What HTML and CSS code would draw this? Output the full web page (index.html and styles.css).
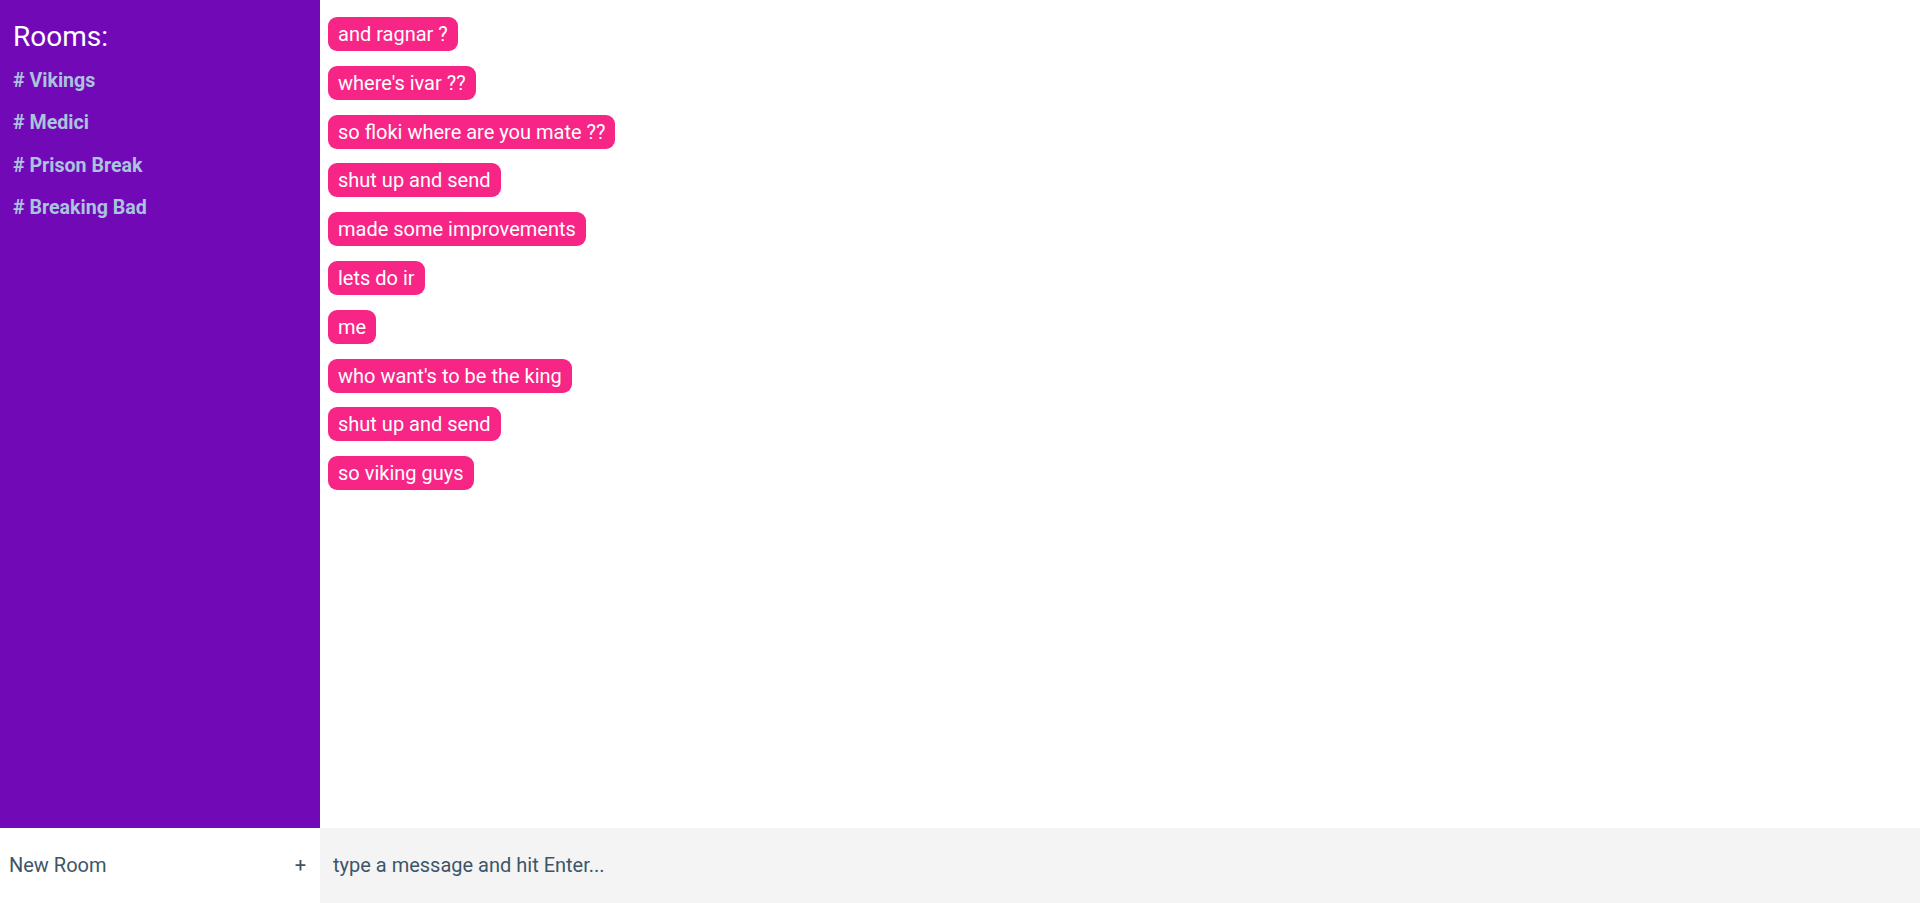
FILE: index.html
```html
<!DOCTYPE html>
<html>
<head>
<meta charset="utf-8">
<title>Chat</title>
<link rel="stylesheet" href="styles.css">
</head>
<body>
<div class="app">
  <aside class="rooms">
    <div class="rooms-title">Rooms:</div>
    <ul class="room-list">
      <li class="room"># Vikings</li>
      <li class="room"># Medici</li>
      <li class="room"># Prison Break</li>
      <li class="room"># Breaking Bad</li>
    </ul>
  </aside>
  <main class="messages">
    <div class="msg">and ragnar ?</div>
    <div class="msg">where's ivar ??</div>
    <div class="msg">so floki where are you mate ??</div>
    <div class="msg">shut up and send</div>
    <div class="msg">made some improvements</div>
    <div class="msg">lets do ir</div>
    <div class="msg">me</div>
    <div class="msg">who want's to be the king</div>
    <div class="msg">shut up and send</div>
    <div class="msg">so viking guys</div>
  </main>
  <form class="new-room">
    <input class="new-room-input" type="text" placeholder="New Room">
    <button class="new-room-btn" type="button">+</button>
  </form>
  <form class="send">
    <input class="send-input" type="text" placeholder="type a message and hit Enter...">
  </form>
</div>
</body>
</html>
```
FILE: styles.css
```css
* { box-sizing: border-box; }
html, body { margin: 0; padding: 0; height: 100%; }
body {
  font-family: Roboto, "Noto Sans", sans-serif;
  background: #fff;
}
.app {
  height: 100vh;
  display: grid;
  grid-template-columns: 1fr 5fr;
  grid-template-rows: 11fr 1fr;
}
.rooms {
  background: #7209b7;
  padding: 20px 13px;
}
.rooms-title {
  color: #fff;
  font-size: 28px;
  margin-bottom: 15.6px;
}
.room-list {
  list-style: none;
  margin: 0;
  padding: 0;
  display: flex;
  flex-direction: column;
  gap: 19.6px;
}
.room {
  color: #a9c4dd;
  font-weight: 700;
  font-size: 19.6px;
}
.messages {
  padding: 17px 8px;
  display: flex;
  flex-direction: column;
  align-items: flex-start;
  gap: 14.8px;
  overflow: hidden;
}
.msg {
  background: #f72585;
  color: #fff;
  font-size: 20px;
  padding: 5px 10px;
  border-radius: 9px;
}
.new-room {
  margin: 0;
  display: flex;
  align-items: center;
  background: #fff;
  padding: 0 0 0 9px;
}
.new-room-input {
  flex: 1;
  min-width: 0;
  border: 0;
  outline: 0;
  background: transparent;
  padding: 0;
  font-family: inherit;
  font-size: 20px;
  color: #3e5567;
}
.new-room-input::placeholder, .send-input::placeholder { color: #3e5567; opacity: 1; }
.new-room-btn {
  border: 0;
  background: transparent;
  font-family: inherit;
  font-size: 20px;
  color: #3e5567;
  padding: 0 14px 0 10px;
}
.send {
  margin: 0;
  background: #f4f4f4;
  display: flex;
  align-items: center;
  padding: 0 13px;
}
.send-input {
  flex: 1;
  border: 0;
  outline: 0;
  background: transparent;
  padding: 0;
  font-family: inherit;
  font-size: 20px;
  color: #3e5567;
}
```
